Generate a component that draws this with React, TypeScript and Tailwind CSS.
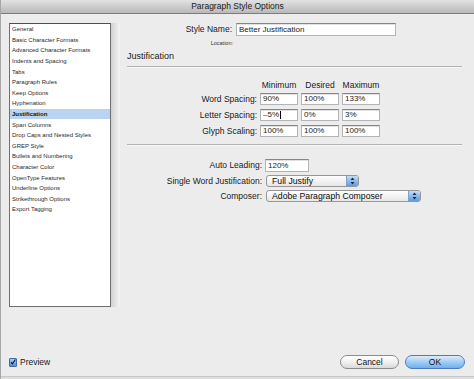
import React from 'react';

const sections = [
  'General',
  'Basic Character Formats',
  'Advanced Character Formats',
  'Indents and Spacing',
  'Tabs',
  'Paragraph Rules',
  'Keep Options',
  'Hyphenation',
  'Justification',
  'Span Columns',
  'Drop Caps and Nested Styles',
  'GREP Style',
  'Bullets and Numbering',
  'Character Color',
  'OpenType Features',
  'Underline Options',
  'Strikethrough Options',
  'Export Tagging',
];

const rows = [
  { label: 'Word Spacing:', values: ['90%', '100%', '133%'] },
  { label: 'Letter Spacing:', values: ['\u20135%', '0%', '3%'] },
  { label: 'Glyph Scaling:', values: ['100%', '100%', '100%'] },
];

function Field({ value, className = '', caret = false }: { value: string; className?: string; caret?: boolean }) {
  return (
    <div
      className={`flex items-center border border-[#b4b4b4] border-t-[#858585] bg-white pl-[2px] text-[8px] leading-none text-[#1a1a1a] shadow-[inset_0_1px_0_#e2e2e2] ${className}`}
    >
      {value}
      {caret && <span className="ml-[1px] h-[8px] w-px bg-black" />}
    </div>
  );
}

function Popup({ value, className = '' }: { value: string; className?: string }) {
  return (
    <div
      className={`flex h-[12px] items-center overflow-hidden rounded-[3px] border border-[#979797] bg-gradient-to-b from-white to-[#e6e6e6] text-[8.7px] leading-none text-[#0d0d0d] ${className}`}
    >
      <span className="pl-[5px]">{value}</span>
      <div className="ml-auto flex h-full w-[12px] items-center justify-center border-l border-[#7e9fcf] bg-gradient-to-b from-[#c4dcf7] via-[#8dbbef] to-[#5b9be6]">
        <svg width="5" height="8" viewBox="0 0 5 8">
          <path d="M2.5 0.5 L4.5 3 H0.5 Z" fill="#1b2a40" />
          <path d="M2.5 7.5 L4.5 5 H0.5 Z" fill="#1b2a40" />
        </svg>
      </div>
    </div>
  );
}

export default function App() {
  return (
    <div
      className="flex h-[379px] w-[474px] flex-col overflow-hidden border-l border-[#a6a6a6] bg-[#ececec] text-[#1a1a1a]"
      style={{ fontFamily: '"Liberation Sans", Arial, sans-serif' }}
    >
      {/* title bar */}
      <div className="flex h-[14px] shrink-0 items-center justify-center border-b border-[#7c7c7c] bg-gradient-to-b from-[#e2e2e2] to-[#b9b9b9] text-[8.5px] leading-none text-[#1a1a1a]">
        Paragraph Style Options
      </div>

      <div className="flex h-[294px] shrink-0">
        {/* sidebar */}
        <div className="flex pl-[8px] pt-[9px]">
          <div className="h-[284px] w-[102px] border border-[#6f6f6f] border-t-[#4f4f4f] bg-white">
            {sections.map((s) => (
              <div
                key={s}
                className={`flex h-[10.6px] items-center pl-[2px] text-[6px] leading-none ${
                  s === 'Justification' ? 'bg-[#b9d3f2] font-bold text-[#111]' : 'text-[#2a2a2a]'
                }`}
              >
                {s}
              </div>
            ))}
          </div>
          <div className="h-[284px] w-[9px] bg-gradient-to-r from-[#d2d2d2] to-[#f3f3f3]" />
        </div>

        {/* right panel */}
        <div className="ml-[7px] flex w-[335px] flex-col pt-[9px]">
          <div className="flex h-[13px] items-center">
            <div className="w-[105px] text-right text-[8.5px] leading-none">Style Name:</div>
            <Field value="Better Justification" className="ml-[4px] h-[13px] w-[160px] text-[8.5px]" />
          </div>
          <div className="mt-[4px] flex h-[8px] items-center">
            <div className="w-[106px] text-right text-[5.5px] leading-none text-[#333]">Location:</div>
          </div>
          <div className="mt-[3px] h-[10px] text-[9px] leading-[10px]">Justification</div>
          <div className="mt-[5px] h-[2px] border-t border-[#b3b3b3] bg-[#f7f7f7]" />

          <div className="mt-[12px] flex h-[10px] items-center text-[8.5px] leading-none">
            <div className="w-[130px]" />
            <div className="ml-[3px] w-[38px] text-center">Minimum</div>
            <div className="ml-[3px] w-[38px] text-center">Desired</div>
            <div className="ml-[3px] w-[38px] text-center">Maximum</div>
          </div>
          <div className="mt-[3px] flex flex-col gap-[4px]">
            {rows.map((r, i) => (
              <div key={r.label} className="flex h-[12px] items-center">
                <div className="w-[130px] text-right text-[8.5px] leading-none">{r.label}</div>
                {r.values.map((v, j) => (
                  <Field key={j} value={v} caret={i === 1 && j === 0} className="ml-[3px] h-[12px] w-[38px]" />
                ))}
              </div>
            ))}
          </div>
          <div className="mt-[7px] h-[2px] border-t border-[#b3b3b3] bg-[#f7f7f7]" />

          <div className="mt-[13px] flex h-[13px] items-center">
            <div className="w-[135px] text-right text-[8.5px] leading-none">Auto Leading:</div>
            <Field value="120%" className="ml-[3px] h-[13px] w-[44px]" />
          </div>
          <div className="mt-[3px] flex h-[12px] items-center">
            <div className="w-[135px] text-right text-[8.5px] leading-none">Single Word Justification:</div>
            <Popup value="Full Justify" className="ml-[4px] w-[93px]" />
          </div>
          <div className="mt-[3px] flex h-[12px] items-center">
            <div className="w-[135px] text-right text-[8.5px] leading-none">Composer:</div>
            <Popup value="Adobe Paragraph Composer" className="ml-[4px] w-[155px]" />
          </div>
        </div>
      </div>

      {/* footer */}
      <div className="mt-[47px] flex h-[14px] shrink-0 items-center pl-[8px] pr-[9px]">
        <div className="flex items-center">
          <div className="flex h-[9px] w-[8px] items-center justify-center rounded-[1px] border border-[#3f6aa8] bg-gradient-to-b from-[#a9cdf3] to-[#4d8fdc]">
            <svg width="8" height="8" viewBox="0 0 8 8">
              <path d="M1.2 4.2 L3.2 6.4 L7.2 0.6" stroke="#111" strokeWidth="1.4" fill="none" />
            </svg>
          </div>
          <span className="ml-[3px] text-[8.5px] leading-none">Preview</span>
        </div>
        <div className="ml-auto flex gap-[6px]">
          <button className="flex h-[14px] w-[59px] items-center justify-center rounded-full border border-[#8c8c8c] bg-gradient-to-b from-white via-[#f1f1f1] to-[#d9d9d9] text-[8.5px] leading-none text-[#111]">
            Cancel
          </button>
          <button className="flex h-[14px] w-[60px] items-center justify-center rounded-full border border-[#4b7cc0] bg-gradient-to-b from-[#dcecfc] via-[#a2cdf5] to-[#6db0ee] text-[8.5px] leading-none text-[#111]">
            OK
          </button>
        </div>
      </div>
      <div className="mt-auto h-[3px] border-t border-[#c9c9c9] bg-[#dedede]" />
    </div>
  );
}
